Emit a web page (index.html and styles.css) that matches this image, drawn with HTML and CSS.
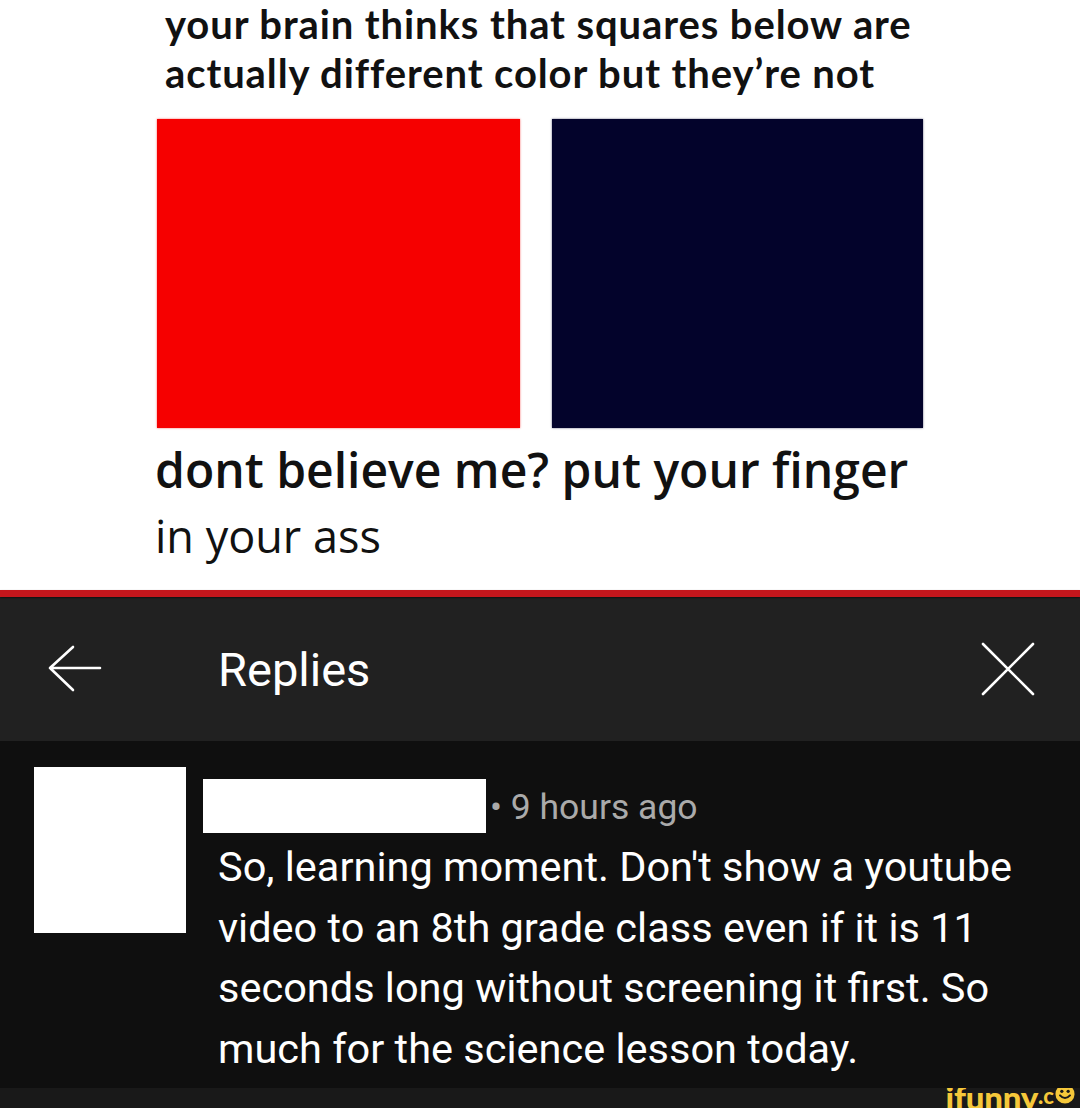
FILE: index.html
```html
<!DOCTYPE html>
<html>
<head>
<meta charset="utf-8">
<link rel="stylesheet" href="styles.css">
</head>
<body>
<div class="page">
  <section class="meme">
    <p class="caption-top">your brain thinks that squares below are<br>actually different color but they’re not</p>
    <div class="squares">
      <div class="sq sq-red"></div>
      <div class="sq sq-navy"></div>
    </div>
    <p class="caption-bottom"><span class="cb1">dont believe me? put your finger</span><br><span class="cb2">in your ass</span></p>
  </section>
  <div class="redline"></div>
  <header class="bar">
    <svg class="ico-back" width="56" height="50" viewBox="0 0 56 50">
      <path d="M27 3 L4 24 L27 46 M4 24 L54 24" fill="none" stroke="#fff" stroke-width="2.6" stroke-linecap="round" stroke-linejoin="round"/>
    </svg>
    <h1 class="title">Replies</h1>
    <svg class="ico-close" width="56" height="56" viewBox="0 0 56 56">
      <path d="M3 3 L53 53 M53 3 L3 53" fill="none" stroke="#fff" stroke-width="2.6" stroke-linecap="round"/>
    </svg>
  </header>
  <main class="comment">
    <div class="avatar"></div>
    <div class="content">
      <div class="meta">
        <div class="name"></div>
        <span class="time">• 9 hours ago</span>
      </div>
      <p class="text">So, learning moment. Don't show a youtube video to an 8th grade class even if it is 11 seconds long without screening it first. So much for the science lesson today.</p>
    </div>
  </main>
  <footer class="foot">
    <span class="logo"><span class="logo-main">ifunny</span><span class="logo-co">.c</span><svg class="smile" width="20" height="20" viewBox="0 0 22 22"><circle cx="11" cy="11" r="10.5" fill="#f6c83a"/><circle cx="7.5" cy="8" r="1.8" fill="#1a1a1a"/><circle cx="14.5" cy="8" r="1.8" fill="#1a1a1a"/><path d="M5.5 12.5 Q11 18.5 16.5 12.5" fill="none" stroke="#1a1a1a" stroke-width="2.2" stroke-linecap="round"/></svg></span>
  </footer>
</div>
</body>
</html>
```

FILE: styles.css
```css
html, body {
  margin: 0;
  padding: 0;
  background: #191919;
}
.page {
  width: 1080px;
  height: 1108px;
  overflow: hidden;
  display: flex;
  flex-direction: column;
}
.meme {
  background: #ffffff;
  height: 590px;
  flex: none;
  overflow: hidden;
}
.caption-top {
  margin: 0;
  padding-left: 165px;
  font-family: "Lato", "Open Sans", sans-serif;
  font-weight: 700;
  font-size: 40px;
  line-height: 49px;
  letter-spacing: 0.9px;
  color: #111;
  white-space: nowrap;
}
.squares {
  display: flex;
  gap: 32px;
  margin: 21px 0 0 157px;
}
.sq {
  height: 309px;
}
.sq-red {
  width: 363px;
  background: #f60000;
  box-shadow: 0 0 2px rgba(246,0,0,0.6);
}
.sq-navy {
  width: 371px;
  background: #03032b;
  box-shadow: 0 0 2px rgba(3,3,43,0.6);
}
.caption-bottom {
  margin: 9px 0 0 0;
  padding-left: 155px;
  font-family: "Open Sans", "Lato", sans-serif;
  font-size: 48px;
  line-height: 65px;
  color: #111;
  white-space: nowrap;
}
.cb1 {
  font-weight: 600;
}
.cb2 {
  font-weight: 500;
  font-size: 45px;
}
.redline {
  height: 7px;
  flex: none;
  background: #c4161c;
  box-shadow: 0 1px 2px rgba(0,0,0,0.5);
  position: relative;
  z-index: 1;
}
.bar {
  height: 144px;
  flex: none;
  background: #212121;
  display: flex;
  align-items: center;
  padding-left: 46px;
  box-sizing: border-box;
}
.ico-back {
  display: block;
}
.title {
  margin: 0 0 0 116px;
  font-family: "Roboto", sans-serif;
  font-weight: 400;
  font-size: 47px;
  color: #fff;
  flex: 1;
}
.ico-close {
  display: block;
  margin-right: 44px;
}
.comment {
  flex: none;
  height: 347px;
  box-sizing: border-box;
  background: #0f0f0f;
  display: flex;
  align-items: flex-start;
  padding: 26px 0 0 34px;
  gap: 17px;
}
.avatar {
  width: 152px;
  height: 166px;
  background: #fff;
  flex: none;
}
.content {
  flex: 1;
}
.meta {
  display: flex;
  align-items: center;
  margin-top: 12px;
}
.name {
  width: 283px;
  height: 54px;
  background: #fff;
}
.time {
  margin-left: 4px;
  font-family: "Roboto", sans-serif;
  font-size: 35.5px;
  color: #aaaaaa;
  position: relative;
  top: 1px;
}
.text {
  margin: 4px 40px 0 15px;
  font-family: "Roboto", sans-serif;
  font-size: 41.5px;
  line-height: 60.5px;
  color: #fff;
}
.foot {
  flex: 1;
  background: #191919;
  display: flex;
  justify-content: flex-end;
  align-items: flex-start;
  overflow: hidden;
  padding-right: 5px;
}
.logo {
  margin-top: -6px;
  font-family: "Lato", sans-serif;
  font-weight: 900;
  color: #f6c83a;
  display: flex;
  align-items: flex-start;
}
.logo-main {
  font-size: 33px;
  line-height: 30px;
  letter-spacing: -0.2px;
}
.logo-co {
  font-size: 22px;
  line-height: 22px;
  margin-top: 3px;
}
.smile {
  display: block;
  margin-left: 1px;
  margin-top: 2px;
}
```
